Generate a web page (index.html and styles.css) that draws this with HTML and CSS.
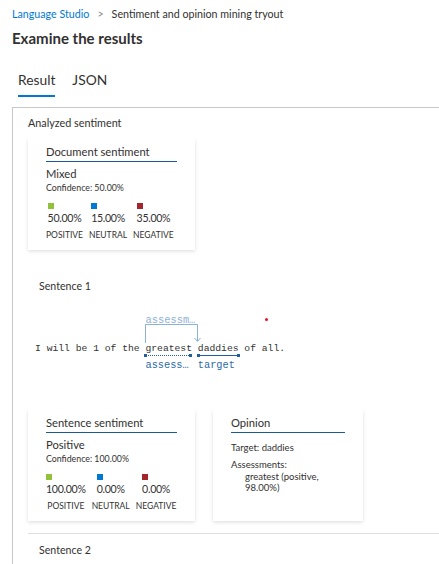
FILE: index.html
```html
<!DOCTYPE html>
<html>
<head>
<meta charset="utf-8">
<link rel="stylesheet" href="styles.css">
</head>
<body>
<div class="breadcrumb">
  <span class="crumb-link">Language Studio</span>
  <span class="crumb-sep">&gt;</span>
  <span class="crumb-current">Sentiment and opinion mining tryout</span>
</div>
<h1 class="page-title">Examine the results</h1>
<div class="tabs">
  <div class="tab tab-active">Result</div>
  <div class="tab">JSON</div>
</div>
<div class="panel">
  <div class="section-label">Analyzed sentiment</div>
  <div class="card card-doc">
    <div class="card-title">Document sentiment</div>
    <div class="sent-main">Mixed</div>
    <div class="sent-conf">Confidence: 50.00%</div>
    <div class="scores">
      <div class="score">
        <div class="score-top"><span class="sq sq-pos"></span><span class="score-val">50.00%</span></div>
        <div class="score-lbl">POSITIVE</div>
      </div>
      <div class="score">
        <div class="score-top"><span class="sq sq-neu"></span><span class="score-val">15.00%</span></div>
        <div class="score-lbl">NEUTRAL</div>
      </div>
      <div class="score">
        <div class="score-top"><span class="sq sq-neg"></span><span class="score-val">35.00%</span></div>
        <div class="score-lbl">NEGATIVE</div>
      </div>
    </div>
  </div>

  <div class="sentence-label">Sentence 1</div>
  <div class="annot">
    <span class="red-dot"></span>
    <div class="annot-line">I will be 1 of the <span class="tok tok-assess"><span class="top-lbl">assessm…</span><svg class="bracket" width="56" height="22" viewBox="0 0 56 22"><path d="M0.5 21 V2.5 H52.5 V19" fill="none" stroke="#8db2d8" stroke-width="1"/><path d="M49.5 16 L52.5 19.5 L55.5 16" fill="none" stroke="#8db2d8" stroke-width="1"/></svg>greatest<span class="uline uline-dot"></span><span class="bot-lbl">assess…</span></span> <span class="tok tok-target">daddies<span class="uline uline-solid"></span><span class="bot-lbl">target</span></span> of all.</div>
  </div>

  <div class="cards-row">
    <div class="card card-sent">
      <div class="card-title">Sentence sentiment</div>
      <div class="sent-main">Positive</div>
      <div class="sent-conf">Confidence: 100.00%</div>
      <div class="scores">
        <div class="score">
          <div class="score-top"><span class="sq sq-pos"></span><span class="score-val">100.00%</span></div>
          <div class="score-lbl">POSITIVE</div>
        </div>
        <div class="score">
          <div class="score-top"><span class="sq sq-neu"></span><span class="score-val">0.00%</span></div>
          <div class="score-lbl">NEUTRAL</div>
        </div>
        <div class="score">
          <div class="score-top"><span class="sq sq-neg"></span><span class="score-val">0.00%</span></div>
          <div class="score-lbl">NEGATIVE</div>
        </div>
      </div>
    </div>
    <div class="card card-op">
      <div class="card-title">Opinion</div>
      <div class="op-line">Target: daddies</div>
      <div class="op-line op-assess">Assessments:</div>
      <div class="op-item">greatest (positive,<br>98.00%)</div>
    </div>
  </div>

  <div class="divider"></div>
  <div class="sentence-label sentence2">Sentence 2</div>
</div>
</body>
</html>
```

FILE: styles.css
```css
html, body {
  margin: 0;
  padding: 0;
  background: #ffffff;
}
body {
  font-family: "Lato", "Open Sans", sans-serif;
  color: #323130;
  width: 439px;
  height: 564px;
  overflow: hidden;
}
.breadcrumb {
  padding: 5px 0 0 12px;
  height: 17px;
  font-size: 10.7px;
  line-height: 17px;
  display: flex;
  gap: 8px;
}
.crumb-link { color: #0078d4; }
.crumb-sep { color: #8a8886; }
.crumb-current { color: #323130; }
.page-title {
  margin: 0;
  padding: 5px 0 0 12px;
  font-size: 15px;
  font-weight: 700;
  line-height: 22px;
  height: 22px;
  color: #323130;
}
.tabs {
  display: flex;
  gap: 17px;
  padding: 21px 0 0 18px;
  height: 29px;
}
.tab {
  font-size: 13.8px;
  line-height: 20px;
  height: 27px;
  box-sizing: border-box;
}
.tab-active {
  border-bottom: 2px solid #0078d4;
}
.panel {
  margin-left: 12px;
  margin-top: 8px;
  border-left: 1px solid #c8c8c8;
  border-top: 1px solid #c8c8c8;
  padding-left: 15px;
  height: 459px;
  overflow: hidden;
}
.section-label {
  font-size: 10.8px;
  line-height: 16px;
  padding-top: 7px;
}
.card {
  background: #fff;
  box-shadow: 0 1.6px 3.6px rgba(0,0,0,0.13), 0 0.3px 0.9px rgba(0,0,0,0.11);
  box-sizing: border-box;
  padding: 6px 18px 0 18px;
}
.card-doc {
  margin-top: 7px;
  width: 167px;
  height: 112px;
}
.card-title {
  font-size: 11.2px;
  line-height: 16px;
  border-bottom: 1px solid #1c5a92;
  height: 17px;
}
.sent-main {
  font-size: 11.2px;
  line-height: 15px;
  margin-top: 4px;
}
.sent-conf {
  font-size: 8.8px;
  line-height: 13px;
}
.scores {
  display: flex;
  gap: 6px;
  margin-top: 9px;
}
.score {
  display: flex;
  flex-direction: column;
  align-items: center;
}
.score-top {
  display: flex;
  flex-direction: column;
  align-items: flex-start;
}
.sq {
  width: 6px;
  height: 6px;
  display: block;
}
.sq-pos { background: #92c13a; }
.sq-neu { background: #0078d4; }
.sq-neg { background: #a4262c; }
.score-val {
  font-size: 10.6px;
  letter-spacing: -0.3px;
  line-height: 14px;
  margin-top: 2px;
}
.score-lbl {
  font-size: 8.5px;
  line-height: 12px;
  margin-top: 4px;
}
.sentence-label {
  font-size: 10.6px;
  line-height: 16px;
  margin-top: 28px;
  padding-left: 11px;
}
.annot {
  position: relative;
  height: 115px;
}
.red-dot {
  position: absolute;
  left: 237px;
  top: 24px;
  width: 3px;
  height: 3px;
  border-radius: 50%;
  background: #e81123;
}
.annot-line {
  font-family: "Liberation Mono", monospace;
  font-size: 9.7px;
  line-height: 12px;
  color: #333;
  padding: 49px 0 0 7px;
  white-space: pre;
}
.tok {
  position: relative;
  display: inline-block;
}
.top-lbl {
  position: absolute;
  left: 0;
  top: -29px;
  color: #8db2d8;
  font-size: 10.4px;
  line-height: 12px;
}
.bracket {
  position: absolute;
  left: 0;
  top: -21px;
}
.uline {
  position: absolute;
  left: 0;
  right: 0;
  bottom: -1px;
  height: 0;
}
.uline-dot {
  border-top: 1px dotted #1f5f9e;
  right: 1px;
}
.uline-solid {
  border-top: 1px solid #1f5f9e;
}
.uline::before, .uline::after {
  content: "";
  position: absolute;
  top: -2px;
  width: 3px;
  height: 3px;
  background: #1f5f9e;
}
.uline::before { left: -1px; }
.uline::after { right: -1px; }
.bot-lbl {
  position: absolute;
  left: 0;
  top: 16px;
  color: #2b6aa8;
  font-size: 10.3px;
  line-height: 12px;
}
.cards-row {
  display: flex;
  gap: 18px;
}
.card-sent {
  width: 167px;
  height: 112px;
}
.card-op {
  width: 150px;
  height: 112px;
}
.op-line {
  font-size: 9.5px;
  line-height: 12px;
  margin-top: 9px;
}
.op-assess {
  margin-top: 5px;
}
.op-item {
  font-size: 9.5px;
  line-height: 11px;
  padding-left: 14px;
  margin-top: 0;
}
.divider {
  margin-top: 12px;
  border-top: 1px solid #e1dfdd;
}
.sentence2 {
  margin-top: 8px;
}
```
